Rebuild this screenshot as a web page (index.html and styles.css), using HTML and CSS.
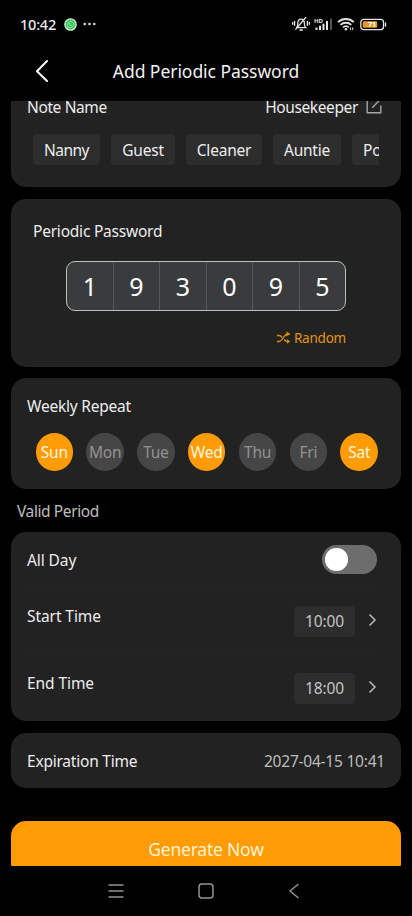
FILE: index.html
```html
<!DOCTYPE html>
<html lang="en">
<head>
<meta charset="utf-8">
<meta name="viewport" content="width=device-width, initial-scale=1">
<title>Add Periodic Password</title>
<link rel="stylesheet" href="styles.css">
</head>
<body>
<div class="screen">
  <div class="status">
    <span class="clock">10:42</span>
    <svg class="app-badge" width="13" height="13" viewBox="0 0 13 13"><circle cx="6.5" cy="6.5" r="6.3" fill="#dcebd9"/><circle cx="6.5" cy="6.5" r="5" fill="#35c759"/><path d="M3.4 9.7l.5-1.7a3.1 3.1 0 1 1 1.2 1.2z" fill="none" stroke="#a5eab2" stroke-width=".7"/><path d="M5.3 5c0 1.600 1.200 2.800 2.700 2.900" fill="none" stroke="#a5eab2" stroke-width=".9"/></svg>
    <svg class="more" width="13" height="4" viewBox="0 0 13 4" fill="#ddd"><circle cx="1.700" cy="2" r="1.300"/><circle cx="6.500" cy="2" r="1.300"/><circle cx="11.300" cy="2" r="1.300"/></svg>
    <div class="status-right">
      <svg width="18" height="16" viewBox="0 0 18 16" fill="none" stroke="#e4e4e4" stroke-width="1.300" stroke-linecap="round"><path d="M4.500 11.700h9.200c-1.100-1-1.300-2-1.300-4.200 0-2.700-1-4.300-3.200-4.300S5.800 4.800 5.800 7.500c0 2-.3 3.200-1.300 4.200M8 14h2.400M3.800 13.200L13.800 1.500M2.600 5.300v4M.7 6.300v2M15.400 5.300v4M17.300 6.300v2"/></svg>
      <svg class="signal" width="20" height="14" viewBox="0 0 20 14" fill="#e4e4e4"><text x="0" y="5.500" class="hd">HD</text><rect x="1.500" y="10.500" width="2" height="2.500"/><rect x="5" y="8.700" width="2" height="4.300"/><rect x="8.500" y="6.700" width="2" height="6.300"/><rect x="12" y="4" width="2" height="9"/><rect x="16" y="1.500" width="2" height="11.500" fill="#555"/></svg>
      <svg class="wifi" width="18" height="14" viewBox="0 0 18 14" fill="none" stroke="#e4e4e4" stroke-width="1.800"><path d="M1 5.200a11.400 11.400 0 0 1 15.800 0M3.500 7.900a7.800 7.800 0 0 1 10.800 0M6 10.400a4.300 4.300 0 0 1 5.800 0"/><circle cx="8.900" cy="12.200" r="1.300" fill="#e4e4e4" stroke="none"/><path d="M13.500 10.500v2.500M15.700 10.500v2.500" stroke-width="1"/></svg>
      <svg class="battery" width="27" height="13" viewBox="0 0 27 13"><rect x=".8" y="1.300" width="22.700" height="10.400" rx="3" fill="none" stroke="#e4e4e4" stroke-width="1.300"/><rect x="2.700" y="3.200" width="14.500" height="6.600" rx="1.300" fill="#e39a2b"/><path d="M25.500 5v3" stroke="#e4e4e4" stroke-width="1.400" stroke-linecap="round"/><text x="12" y="9.200" class="charge">71</text></svg>
    </div>
  </div>
  <header class="header">
    <svg class="back" width="14" height="24" viewBox="0 0 14 24" fill="none" stroke="#fff" stroke-width="2" stroke-linecap="round" stroke-linejoin="round"><path d="M12 2L2 12.300l10 9.700"/></svg>
    <h1 class="title">Add Periodic Password</h1>
  </header>
  <main class="content">
    <section class="card note">
      <div class="note-row"><span class="note-label">Note Name</span><span class="note-value">Housekeeper</span>
        <svg class="edit" width="16" height="18" viewBox="0 0 16 18" fill="none" stroke="#a5a5a5" stroke-width="1.400"><path d="M8 1.800H1.200v14h13.600V8.500M6.200 10.800L14.500 2.300"/></svg></div>
      <div class="chips"><span class="chip c1">Nanny</span><span class="chip c2">Guest</span><span class="chip c3">Cleaner</span><span class="chip c4">Auntie</span><span class="chip c5">Po</span></div>
    </section>
    <section class="card password">
      <div class="password-label">Periodic Password</div>
      <div class="code"><span>1</span><span>9</span><span>3</span><span>0</span><span>9</span><span>5</span></div>
      <div class="random">
        <svg width="15" height="13" viewBox="0 0 15 13" fill="none" stroke="#dc8b12" stroke-width="1.300"><path d="M1 10.500h2.200c3.300 0 4.600-7.500 8.500-7.500M1 4.500h2.200c1.300 0 2.200 1 3 2M8 8.500c.9 1.100 1.800 2 3.500 2"/><path d="M10.500.5L14.500 3l-4 2.500zM11 8.300l3.300 2.200-3.300 2.200z" fill="#dc8b12" stroke="none"/></svg>
        <span>Random</span>
      </div>
    </section>
    <section class="card weekly">
      <div class="weekly-label">Weekly Repeat</div>
      <div class="days"><span class="day on">Sun</span><span class="day">Mon</span><span class="day">Tue</span><span class="day on">Wed</span><span class="day">Thu</span><span class="day">Fri</span><span class="day on">Sat</span></div>
    </section>
    <h2 class="section">Valid Period</h2>
    <section class="card period">
      <div class="row all-day"><span class="all-label">All Day</span><span class="toggle"><i></i></span></div>
      <div class="row start"><span class="row-label">Start Time</span><span class="time">10:00</span><svg class="chev" width="9" height="14" viewBox="0 0 9 14"><path d="M1.500 1.500L7 7l-5.500 5.500"/></svg></div>
      <div class="row end"><span class="row-label end-label">End Time</span><span class="time">18:00</span><svg class="chev" width="9" height="14" viewBox="0 0 9 14"><path d="M1.500 1.500L7 7l-5.500 5.500"/></svg></div>
    </section>
    <section class="card expiry"><span class="exp-label">Expiration Time</span><span class="exp-value">2027-04-15 10:41</span></section>
    <div class="generate">Generate Now</div>
  </main>
  <nav class="nav">
    <svg width="16" height="16" viewBox="0 0 16 16" stroke="#929292" stroke-width="1.600"><path d="M.5 2h15M.5 8h15M.5 14h15"/></svg>
    <svg width="16" height="16" viewBox="0 0 16 16" fill="none" stroke="#929292" stroke-width="1.500"><rect x="1" y="1" width="14" height="14" rx="3"/></svg>
    <svg width="12" height="16" viewBox="0 0 12 16" fill="none" stroke="#929292" stroke-width="1.500"><path d="M10.500 1L2 8l8.500 7" stroke-linejoin="round"/></svg>
  </nav>
</div>
</body>
</html>
```
FILE: styles.css
```css
* { box-sizing: border-box; }
body { margin: 0; background: #000; }
svg { display: block; flex: none; }
.screen { width: 412px; height: 916px; overflow: hidden; display: flex; flex-direction: column; background: #000; color: #ededed; font: 15.5px/20px "Noto Sans", sans-serif; letter-spacing: -.22px; white-space: nowrap; }
.status { height: 48px; flex: none; display: flex; align-items: center; padding: 0 25px 0 20px; }
.clock { font: 500 14.5px/20px "Noto Sans", sans-serif; color: #e8e8e8; width: 44px; }
.more { margin-left: 6px; }
.status-right { margin-left: auto; display: flex; align-items: center; }
.signal { margin-left: 4px; }
.wifi { margin-left: 3px; }
.battery { margin-left: 5px; }
.hd { font: 700 6px "Noto Sans", sans-serif; letter-spacing: 0; }
.charge { font: 700 7px "Noto Sans", sans-serif; text-anchor: middle; fill: #fff; letter-spacing: 0; }
.header { height: 53px; flex: none; display: grid; grid-template-columns: 70px 1fr 70px; align-items: center; padding: 0 0 8px; }
.back { margin-left: 35px; }
.title { margin: 0; text-align: center; font-size: 17.5px; font-weight: 400; line-height: 24px; color: #f2f2f2; letter-spacing: -.05px; }
.content { height: 765px; flex: none; overflow: hidden; padding: 0 11px; }
.card { background: #222; border-radius: 15px; }
.note { height: 106px; margin-top: -20px; padding: 16px 16px 0; }
.note-row { display: flex; align-items: center; height: 20px; letter-spacing: -.38px; }
.note-value { margin-left: auto; }
.edit { margin: -2px 3px 0 8px; }
.chips { display: flex; gap: 11px; margin: 17px 6px 0; overflow: hidden; }
.chip { flex: none; height: 31px; line-height: 32px; border-radius: 4px; background: #2d2d2d; text-align: center; }
.c1 { width: 67px; letter-spacing: -.5px; }
.c2 { width: 64px; }
.c3 { width: 76px; }
.c4 { width: 68px; }
.c5 { width: 70px; text-align: left; padding-left: 11px; }
.password { height: 168px; margin-top: 11.5px; padding: 22px 22px 0; }
.code { display: flex; width: 280px; height: 50px; margin: 20px 33px 0; border: 1px solid #bebebe; border-radius: 9px; background: #3a3b3d; overflow: hidden; }
.code span { flex: 1; text-align: center; font-size: 25px; line-height: 48px; color: #fff; }
.code span + span { border-left: 1px solid #55575a; }
.random { display: flex; align-items: center; justify-content: flex-end; gap: 3px; margin: 17px 33px 0; font-size: 13.5px; color: #e59212; }
.weekly { height: 111px; margin-top: 11.500px; padding: 18px 23px 0 16px; }
.days { display: flex; justify-content: space-between; margin: 17px 0 0 8.500px; }
.day { width: 37.500px; height: 38px; border-radius: 50%; background: #464646; color: #929292; display: flex; align-items: center; justify-content: center; }
.day.on { background: #ff9c05; color: #fff6df; }
.section { margin: 12px 0 11px 6px; font-size: 15.5px; line-height: 20px; font-weight: 400; color: #bdbdbd; letter-spacing: -.4px; }
.period { height: 189px; padding: 0 24px 0 16px; }
.row { display: flex; align-items: center; justify-content: space-between; letter-spacing: -.08px; }
.all-day { height: 56px; border-bottom: 1px solid #252525; }
.start { height: 64px; border-bottom: 1px solid #252525; }
.end { height: 69px; }
.row-label { align-self: flex-start; margin-top: 18px; }
.end-label { margin-top: 21px; }
.toggle { width: 55px; height: 29px; border-radius: 15px; background: #6d6d6d; display: flex; align-items: center; padding-left: 3px; }
.toggle i { width: 22.500px; height: 22.500px; border-radius: 50%; background: #fff; }
.time { width: 61px; height: 31px; line-height: 31px; border-radius: 4px; background: #2d2d2d; color: #c4c4c4; text-align: center; margin-left: auto; margin-right: 13px; margin-top: 3px; }
.chev { fill: none; stroke: #b9b9b9; stroke-width: 1.500; }
.expiry { height: 55.500px; margin-top: 11.500px; padding: 1px 16px 0; display: flex; align-items: center; justify-content: space-between; }
.exp-value { color: #bdbdbd; }
.generate { height: 57px; margin-top: 33px; border-radius: 15px; background: #ff9c05; color: #fff3d2; font-size: 17.5px; line-height: 56px; text-align: center; }
.nav { height: 50px; display: flex; justify-content: space-between; align-items: center; padding: 0 112px 0 108px; }
```
